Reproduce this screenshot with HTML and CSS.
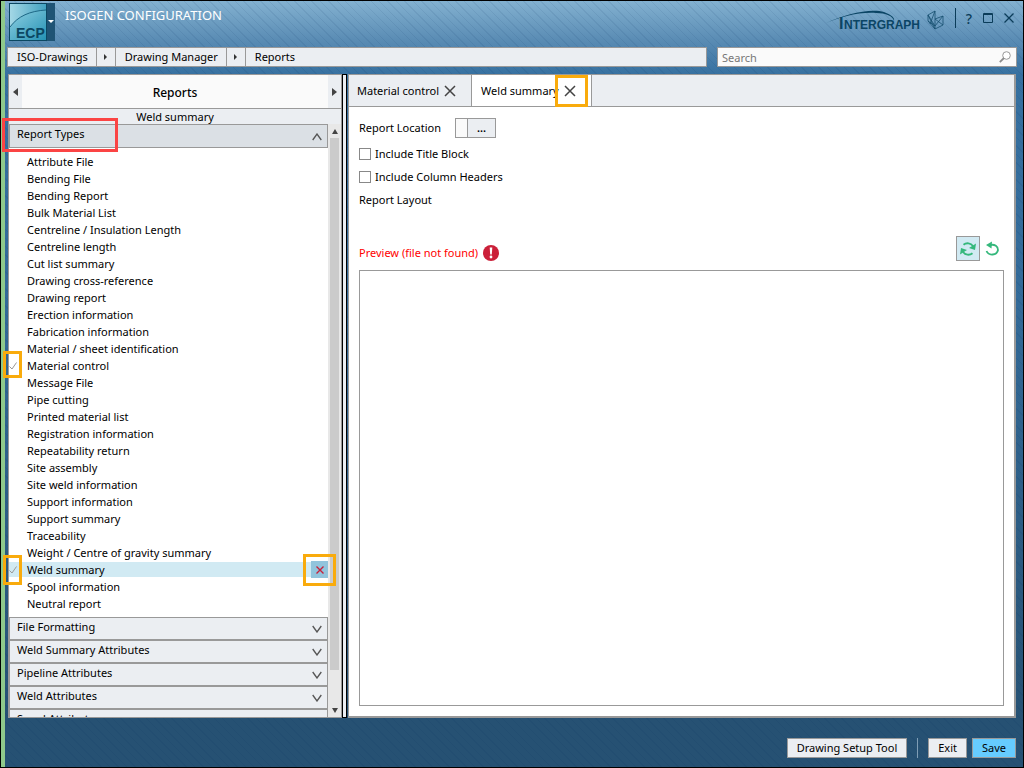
FILE: index.html
```html
<!DOCTYPE html>
<html lang="en">
<head>
  <meta charset="UTF-8" />
  <meta name="viewport" content="width=device-width, initial-scale=1.0" />
  <title>Isogen Configuration</title>
  <link rel="stylesheet" href="styles.css">
</head>
<body>
  <header class="titlebar">
    <button class="app-menu" aria-label="Application menu">
      <svg width="46" height="38" viewBox="0 0 46 38">
        <defs>
          <linearGradient id="tile" x1="0" y1="0" x2="1" y2="1">
            <stop offset="0" stop-color="#8fd0e2" />
            <stop offset="1" stop-color="#2592b4" />
          </linearGradient>
          <linearGradient id="sky" x1="0" y1="0" x2="1" y2="0">
            <stop offset="0" stop-color="#a5d8e6" />
            <stop offset="1" stop-color="#3fa0c0" />
          </linearGradient>
        </defs>
        <rect width="46" height="38" fill="#1f5475" />
        <rect x="0.5" y="0.5" width="37" height="37" fill="url(#sky)" stroke="#0b4762" />
        <path d="M1 24C9 13 21 8 37 7V37H1Z" fill="url(#tile)" />
        <path d="M1 24C9 13 21 8 37 7" fill="none" stroke="#1d6785" />
        <text x="7" y="35" class="app-name">ECP</text>
        <path d="M39 17h6l-3 3z" fill="#fff" />
      </svg>
    </button>
    <h1 class="title">ISOGEN CONFIGURATION</h1>
    <svg class="brand" width="122" height="26" viewBox="0 0 122 26">
      <path d="M0 17C22 6 48 1 60 5C68 8 71 11 70 14C69 9 62 6 52 6C34 5 16 10 0 17Z" fill="#0b4565" />
      <text x="15" y="22" class="brand-initial">I</text>
      <text x="20" y="22" class="brand-name">NTERGRAPH</text>
      <g fill="none" stroke="#174f70" stroke-width="0.8">
        <path d="M104 8L111 4V19L104 14Z" />
        <path d="M104 8L111 22L119 18V9L111 19M104 14L111 22V19L104 8M111 12L119 9M111 4L106 17M119 18L111 12" />
      </g>
    </svg>
    <div class="window-buttons">
      <button aria-label="Help">?</button>
      <button aria-label="Maximize">
        <svg width="10" height="10" viewBox="0 0 10 10"><path d="M0.5 0.5h9v9h-9zM0 1.5h10" fill="none" stroke="#0b3c59" /></svg>
      </button>
      <button aria-label="Close">
        <svg width="10" height="10" viewBox="0 0 10 10"><path d="M0.5 0.5l9 9M9.5 0.5l-9 9" fill="none" stroke="#0b3c59" stroke-width="1.3" /></svg>
      </button>
    </div>
  </header>

  <div class="toolbar">
    <nav class="breadcrumb" aria-label="Breadcrumb">
      <a href="#">ISO-Drawings</a>
      <span class="crumb-arrow"></span>
      <a href="#">Drawing Manager</a>
      <span class="crumb-arrow"></span>
      <a href="#" class="last">Reports</a>
    </nav>
    <div class="search">
      <input type="text" placeholder="Search" aria-label="Search" />
      <svg width="12" height="12" viewBox="0 0 12 12">
        <circle cx="7.5" cy="4.5" r="3.8" fill="#fff" stroke="#999" />
        <path d="M5 7L0.8 11.2" stroke="#8c8c8c" stroke-width="1.8" />
      </svg>
    </div>
  </div>

  <main class="workspace">
    <section class="side">
      <div class="side-head">
        <button class="side-nav" aria-label="Previous"><svg width="5" height="8" viewBox="0 0 5 8"><path d="M5 0v8L0 4z" fill="#444" /></svg></button>
        <h2>Reports</h2>
        <button class="side-nav" aria-label="Next"><svg width="5" height="8" viewBox="0 0 5 8"><path d="M0 0v8l5-4z" fill="#444" /></svg></button>
      </div>
      <div class="side-sub">Weld summary</div>
      <div class="side-body">
        <div class="accordion">
          <button class="section open">
            <span>Report Types</span>
            <svg width="10" height="8" viewBox="0 0 10 8"><path d="M0.7 7L5 1l4.3 6" fill="none" stroke="#555" stroke-width="1.3" /></svg>
            <span class="mark mark-types"></span>
          </button>
          <ul class="types">
            <li><button>Attribute File</button></li>
            <li><button>Bending File</button></li>
            <li><button>Bending Report</button></li>
            <li><button>Bulk Material List</button></li>
            <li><button>Centreline / Insulation Length</button></li>
            <li><button>Centreline length</button></li>
            <li><button>Cut list summary</button></li>
            <li><button>Drawing cross-reference</button></li>
            <li><button>Drawing report</button></li>
            <li><button>Erection information</button></li>
            <li><button>Fabrication information</button></li>
            <li><button>Material / sheet identification</button></li>
            <li>
              <svg class="tick" width="8" height="8" viewBox="0 0 8 8"><path d="M0.5 4.5L3 7l4.5-6.5" fill="none" stroke="#999" /></svg>
              <button>Material control</button>
              <span class="mark mark-tick"></span>
            </li>
            <li><button>Message File</button></li>
            <li><button>Pipe cutting</button></li>
            <li><button>Printed material list</button></li>
            <li><button>Registration information</button></li>
            <li><button>Repeatability return</button></li>
            <li><button>Site assembly</button></li>
            <li><button>Site weld information</button></li>
            <li><button>Support information</button></li>
            <li><button>Support summary</button></li>
            <li><button>Traceability</button></li>
            <li><button>Weight / Centre of gravity summary</button></li>
            <li class="selected">
              <svg class="tick" width="8" height="8" viewBox="0 0 8 8"><path d="M0.5 4.5L3 7l4.5-6.5" fill="none" stroke="#999" /></svg>
              <button>Weld summary</button>
              <button class="remove" aria-label="Remove Weld summary">
                <svg width="8" height="8" viewBox="0 0 8 8"><path d="M0.5 0.5l7 7M7.5 0.5l-7 7" fill="none" stroke="#c8203a" stroke-width="1.4" /></svg>
              </button>
              <span class="mark mark-tick tall"></span>
              <span class="mark mark-remove"></span>
            </li>
            <li><button>Spool information</button></li>
            <li><button>Neutral report</button></li>
          </ul>
          <button class="section"><span>File Formatting</span><svg width="10" height="8" viewBox="0 0 10 8"><path d="M0.7 1L5 7l4.3-6" fill="none" stroke="#555" stroke-width="1.3" /></svg></button>
          <button class="section"><span>Weld Summary Attributes</span><svg width="10" height="8" viewBox="0 0 10 8"><path d="M0.7 1L5 7l4.3-6" fill="none" stroke="#555" stroke-width="1.3" /></svg></button>
          <button class="section"><span>Pipeline Attributes</span><svg width="10" height="8" viewBox="0 0 10 8"><path d="M0.7 1L5 7l4.3-6" fill="none" stroke="#555" stroke-width="1.3" /></svg></button>
          <button class="section"><span>Weld Attributes</span><svg width="10" height="8" viewBox="0 0 10 8"><path d="M0.7 1L5 7l4.3-6" fill="none" stroke="#555" stroke-width="1.3" /></svg></button>
          <button class="section"><span>Spool Attributes</span></button>
        </div>
        <div class="scrollbar">
          <svg width="6" height="5" viewBox="0 0 6 5"><path d="M0 5h6L3 0z" fill="#444" /></svg>
          <div class="thumb"></div>
          <svg width="6" height="5" viewBox="0 0 6 5"><path d="M0 0h6L3 5z" fill="#444" /></svg>
        </div>
      </div>
    </section>

    <div class="splitter"></div>

    <section class="content">
      <div class="tabs">
        <div class="tab">
          <button>Material control</button>
          <button class="tab-close" aria-label="Close Material control">
            <svg width="12" height="12" viewBox="0 0 12 12"><path d="M1 1l10 10M11 1L1 11" fill="none" stroke="#444" stroke-width="1.5" /></svg>
          </button>
        </div>
        <div class="tab active">
          <button>Weld summary</button>
          <button class="tab-close" aria-label="Close Weld summary">
            <svg width="12" height="12" viewBox="0 0 12 12"><path d="M1 1l10 10M11 1L1 11" fill="none" stroke="#444" stroke-width="1.5" /></svg>
          </button>
          <span class="mark mark-close"></span>
        </div>
        <div class="tab-fill"></div>
      </div>
      <form class="form">
        <div class="row location">
          <label for="location">Report Location</label>
          <input type="text" id="location" />
          <button type="button">...</button>
        </div>
        <label class="row"><input type="checkbox" />Include Title Block</label>
        <label class="row"><input type="checkbox" />Include Column Headers</label>
        <div class="row">Report Layout</div>
        <div class="preview-head">
          <label for="preview">Preview (file not found)</label>
          <svg width="16" height="16" viewBox="0 0 16 16">
            <circle cx="8" cy="8" r="8" fill="#cb2039" />
            <path d="M6.7 2.5h2.6l-0.5 7h-1.6z" fill="#fff" />
            <circle cx="8" cy="12" r="1.4" fill="#fff" />
          </svg>
          <div class="preview-tools">
            <button type="button" class="tool on" aria-label="Auto refresh">
              <svg width="16" height="16" viewBox="0 0 16 16">
                <path d="M3.5 3.8A6.5 6.5 0 0 1 13 5M12.5 12.2A6.5 6.5 0 0 1 3 11" fill="none" stroke="#35b87c" stroke-width="1.8" />
                <path d="M16 2.5L15 9L9 7zM0 13.5L1 7L7 9z" fill="#35b87c" />
              </svg>
            </button>
            <button type="button" class="tool" aria-label="Reset">
              <svg width="16" height="16" viewBox="0 0 16 16">
                <path d="M6 4C11 3 14 5.5 14 9A6 5.5 0 0 1 2.500 10" fill="none" stroke="#35b87c" stroke-width="1.8" />
                <path d="M8 0.500L7.500 7.500L2 4z" fill="#35b87c" />
              </svg>
            </button>
          </div>
        </div>
        <textarea id="preview" class="preview" readonly></textarea>
      </form>
    </section>
  </main>

  <footer class="actions">
    <button>Drawing Setup Tool</button>
    <span class="divider"></span>
    <button>Exit</button>
    <button class="save">Save</button>
  </footer>
</body>
</html>
```
FILE: styles.css
```css
* {
  box-sizing: border-box;
}
body {
  display: flex;
  flex-direction: column;
  height: 100vh;
  margin: 0;
  padding-left: 5px;
  border: 1px solid #000;
  overflow: hidden;
  font-family: "Noto Sans", "Open Sans", sans-serif;
  font-size: 11px;
  line-height: 17px;
  color: #000;
  background:
    linear-gradient(#8fc98b, #8fc98b) left / 5px 100% no-repeat,
    repeating-linear-gradient(45deg, rgba(0, 40, 90, 0.08) 0 1px, transparent 1px 6px),
    linear-gradient(#84b2d1 0, #5a8cb4 40px, #3670a0 75px, #336a98 300px, #265173 720px);
}
button, input, textarea {
  font: inherit;
  color: inherit;
}
button {
  padding: 0;
  border: none;
  background: none;
}
svg {
  display: block;
  flex: none;
}

/* title bar */
.titlebar {
  display: flex;
  height: 46px;
  padding: 2px 9px 0 3px;
}
.app-menu {
  align-self: flex-start;
}
.app-name {
  font: bold 14px "Liberation Sans", sans-serif;
  fill: #0b4762;
}
.title {
  flex: 1;
  margin: 4px 0 0 10px;
  font-size: 13px;
  font-weight: 400;
  color: #fff;
}
.brand {
  margin-top: 4px;
}
.brand-name, .brand-initial {
  font: bold 12px "Liberation Sans", sans-serif;
  fill: #0b4565;
}
.brand-initial {
  font-size: 16px;
}
.window-buttons {
  display: flex;
  gap: 11px;
  align-items: center;
  height: 20px;
  margin: 5px 0 0 9px;
  padding-left: 10px;
  border-left: 1px solid #0b3c59;
  font-size: 14px;
  font-weight: 500;
  color: #0b3c59;
}

/* breadcrumb and search */
.toolbar {
  display: grid;
  grid-template-columns: 7fr 3fr;
  gap: 10px;
  padding: 0 6px 7px 1px;
}
.breadcrumb, .search {
  display: flex;
  height: 20px;
  border: 1px solid #999;
  background: #ebeef2;
}
.breadcrumb a {
  padding: 0 8px 0 9px;
  line-height: 18px;
  color: #000;
  text-decoration: none;
  border-right: 1px solid #999;
}
.breadcrumb .last {
  border-right: none;
}
.crumb-arrow {
  display: flex;
  align-items: center;
  justify-content: center;
  width: 19px;
  border-right: 1px solid #999;
}
.crumb-arrow::before {
  content: "";
  border: 3px solid transparent;
  border-left-color: #333;
  border-right-width: 0;
}
.search {
  align-items: center;
  padding: 0 5px 0 4px;
  background: #fafafa;
}
.search input {
  flex: 1;
  min-width: 0;
  padding: 0;
  border: none;
  outline: none;
  background: none;
}
.search input::placeholder {
  color: #777;
}

/* main area */
.workspace {
  display: grid;
  grid-template-columns: 1fr 6px 2fr;
  flex: 1;
  min-height: 0;
  padding: 0 7px 0 2px;
}
.side {
  display: flex;
  flex-direction: column;
  min-height: 0;
  border: 1px solid #999;
  background: #fff;
}
.side-head {
  display: flex;
  height: 34px;
  border-bottom: 1px solid #999;
  background: #fafafa;
}
.side-head h2 {
  flex: 1;
  margin: 0;
  font-size: 12px;
  font-weight: 500;
  line-height: 35px;
  text-align: center;
}
.side-nav {
  display: flex;
  align-items: center;
  justify-content: center;
  width: 13px;
  background: #ebeef2;
}
.side-sub {
  height: 15px;
  line-height: 15px;
  text-align: center;
  background: #ebeef2;
}
.side-body {
  display: flex;
  flex: 1;
  min-height: 0;
}
.accordion {
  flex: 1;
  min-height: 0;
  clip-path: inset(-10px -10px 0 -10px);
}
.section {
  position: relative;
  display: flex;
  justify-content: space-between;
  width: 100%;
  height: 23px;
  padding: 0 5px 0 7px;
  border: 1px solid #999;
  text-align: left;
  background: #ebeef2;
}
.section span {
  line-height: 18px;
}
.section svg {
  align-self: center;
  margin-top: 1px;
}
.section.open {
  height: 24px;
  background: #dbe0e5;
}
.types {
  margin: 0;
  padding: 5px 0;
  list-style: none;
}
.types li {
  position: relative;
  display: flex;
  align-items: center;
  height: 17px;
  padding-left: 18px;
}
.types .selected {
  justify-content: space-between;
  background: linear-gradient(#d1eaf3, #d1eaf3) center / 100% 15px no-repeat;
}
.tick {
  position: absolute;
  left: 0;
}
.remove {
  display: flex;
  align-items: center;
  justify-content: center;
  width: 17px;
  height: 17px;
  background: #92c4dc;
}
.scrollbar {
  display: flex;
  flex-direction: column;
  align-items: center;
  gap: 4px;
  width: 13px;
  padding: 5px 0 4px;
  background: #e8e8e8;
}
.thumb {
  width: 9px;
  height: 532px;
  margin-bottom: auto;
  background: #cbcbcb;
}
.splitter {
  margin-right: 1px;
  border: 1px solid #000;
  background: #ebeef2;
}

/* highlight frames */
.mark {
  position: absolute;
  z-index: 1;
  border: 3px solid #f9ab0c;
  pointer-events: none;
}
.mark-types {
  left: -8px;
  top: -7px;
  width: 116px;
  height: 34px;
  border-color: #fb4444;
}
.mark-tick {
  left: -6px;
  top: -6px;
  width: 19px;
  height: 27px;
}
.mark-tick.tall {
  height: 30px;
}
.mark-remove {
  right: -8px;
  top: -7px;
  width: 33px;
  height: 32px;
}
.mark-close {
  right: 3px;
  top: 0;
  width: 33px;
  height: 32px;
}

/* report editor */
.content {
  display: flex;
  flex-direction: column;
  min-width: 0;
  border: 1px solid #999;
  border-width: 1px 2px 2px 1px;
  background: #fff;
}
.tabs {
  display: flex;
  height: 32px;
}
.tab {
  position: relative;
  display: flex;
  align-items: center;
  gap: 5px;
  padding: 0 15px 0 8px;
  border-right: 1px solid #999;
  border-bottom: 1px solid #999;
  background: #ebeef2;
}
.tab.active {
  padding-left: 9px;
  background: #fff;
}
.tab-fill {
  flex: 1;
  border-bottom: 1px solid #999;
  background: #ebeef2;
}
.form {
  display: flex;
  flex: 1;
  flex-direction: column;
  padding: 9px 10px 10px;
}
.row {
  display: flex;
  align-items: center;
  height: 23px;
}
.location {
  margin-bottom: 3px;
}
.location label {
  margin-right: 14px;
}
.location input {
  width: 12px;
  height: 20px;
  padding: 0;
  border: 1px solid #999;
  border-right: none;
  background: #fafafa;
}
.location button {
  width: 29px;
  height: 20px;
  border: 1px solid #999;
  font-weight: 600;
  background: #ebeef2;
}
input[type="checkbox"] {
  appearance: none;
  width: 12px;
  height: 12px;
  margin: 0 4px 0 0;
  border: 1px solid #888;
  background: #fff;
}
.preview-head {
  display: flex;
  align-items: flex-end;
  gap: 5px;
  margin: 25px 0 9px;
  color: #f00;
}
.preview-tools {
  display: flex;
  margin-left: auto;
}
.tool {
  display: flex;
  align-items: center;
  justify-content: center;
  width: 24px;
  height: 25px;
}
.tool.on {
  border: 1px solid #999;
  background: #d1eaf3;
}
.preview {
  flex: 1;
  padding: 4px;
  border: 1px solid #999;
  outline: none;
  resize: none;
  background: #fff;
}

/* bottom buttons */
.actions {
  display: flex;
  justify-content: flex-end;
  gap: 5px;
  padding: 20px 7px 9px;
}
.actions button {
  height: 20px;
  padding: 0 9px;
  border: 1px solid #999;
  line-height: 16px;
  background: #ebeef2;
}
.actions .save {
  background: #66ccff;
}
.divider {
  width: 1px;
  margin: 0 5px;
  background: #7f9db5;
}
```
